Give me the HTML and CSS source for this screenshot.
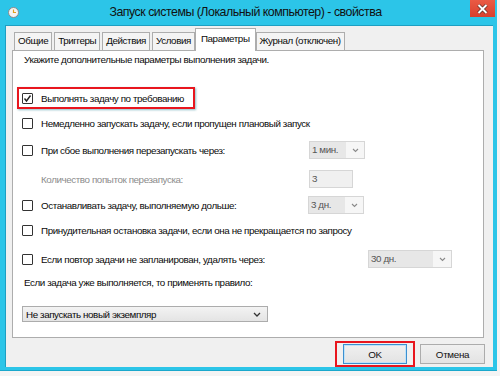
FILE: index.html
```html
<!DOCTYPE html>
<html lang="ru">
<head>
    <meta charset="UTF-8">
    <title>Запуск системы - свойства</title>
    <link rel="stylesheet" href="styles.css">
</head>
<body>
    <div class="window">
        <!-- Заголовок окна -->
        <div class="titlebar">
            <svg class="app-icon" width="11" height="11" viewBox="0 0 11 11">
                <circle cx="5.5" cy="5.5" r="5" fill="#f4f4f4" stroke="#8a8a8a" stroke-width="1"/>
                <path d="M5.5 2.5 V5.5 H8" fill="none" stroke="#e0a020" stroke-width="1.2"/>
            </svg>
            <div class="title">Запуск системы (Локальный компьютер) - свойства</div>
            <div class="close">
                <svg width="11" height="10" viewBox="0 0 11 10">
                    <path d="M1.5 1 L9.5 9 M9.5 1 L1.5 9" stroke="#5a2a20" stroke-width="3.4"/>
                    <path d="M1.5 1 L9.5 9 M9.5 1 L1.5 9" stroke="#ffffff" stroke-width="2"/>
                </svg>
            </div>
        </div>

        <div class="client">
            <!-- Вкладки -->
            <div class="tabs">
                <div class="tab">Общие</div>
                <div class="tab">Триггеры</div>
                <div class="tab">Действия</div>
                <div class="tab">Условия</div>
                <div class="tab tab-active">Параметры</div>
                <div class="tab">Журнал (отключен)</div>
            </div>

            <div class="panel">
                <div class="intro">Укажите дополнительные параметры выполнения задачи.</div>

                <div class="row row-1">
                    <div class="mark">
                        <span class="check">
                            <svg width="9" height="9" viewBox="0 0 9 9"><path d="M1.5 4.5 L3.5 7 L7.5 1.5" fill="none" stroke="#222" stroke-width="1.4"/></svg>
                        </span>
                        <span class="label">Выполнять задачу по требованию</span>
                    </div>
                </div>

                <div class="row row-2">
                    <span class="check"></span>
                    <span class="label">Немедленно запускать задачу, если пропущен плановый запуск</span>
                </div>

                <div class="row row-3">
                    <span class="check"></span>
                    <span class="label label-restart">При сбое выполнения перезапускать через:</span>
                    <div class="select select-small">
                        <span class="select-text">1 мин.</span>
                        <span class="select-arrow"><svg width="7" height="5" viewBox="0 0 7 5"><path d="M1 1 L3.5 3.5 L6 1" fill="none" stroke="#8a8a8a" stroke-width="1.1"/></svg></span>
                    </div>
                </div>

                <div class="row row-4">
                    <span class="label label-muted">Количество попыток перезапуска:</span>
                    <div class="input">3</div>
                </div>

                <div class="row row-5">
                    <span class="check"></span>
                    <span class="label label-stop">Останавливать задачу, выполняемую дольше:</span>
                    <div class="select select-small">
                        <span class="select-text">3 дн.</span>
                        <span class="select-arrow"><svg width="7" height="5" viewBox="0 0 7 5"><path d="M1 1 L3.5 3.5 L6 1" fill="none" stroke="#8a8a8a" stroke-width="1.1"/></svg></span>
                    </div>
                </div>

                <div class="row row-6">
                    <span class="check"></span>
                    <span class="label">Принудительная остановка задачи, если она не прекращается по запросу</span>
                </div>

                <div class="row row-7">
                    <span class="check"></span>
                    <span class="label label-delete">Если повтор задачи не запланирован, удалять через:</span>
                    <div class="select select-wide">
                        <span class="select-text">30 дн.</span>
                        <span class="select-arrow"><svg width="7" height="5" viewBox="0 0 7 5"><path d="M1 1 L3.5 3.5 L6 1" fill="none" stroke="#8a8a8a" stroke-width="1.1"/></svg></span>
                    </div>
                </div>

                <div class="rule">Если задача уже выполняется, то применять правило:</div>

                <div class="combo">
                    <span>Не запускать новый экземпляр</span>
                    <svg width="8" height="5" viewBox="0 0 8 5"><path d="M1 1 L4 4 L7 1" fill="none" stroke="#333" stroke-width="1.3"/></svg>
                </div>
            </div>

            <!-- Кнопки -->
            <div class="buttons">
                <div class="ok-mark">
                    <button class="btn btn-default">OK</button>
                </div>
                <button class="btn">Отмена</button>
            </div>
        </div>
    </div>
</body>
</html>
```

FILE: styles.css
```css
* {
    margin: 0;
    padding: 0;
    box-sizing: border-box;
}

body {
    font-family: 'Liberation Sans', Arial, sans-serif;
    font-size: 9.8px;
    letter-spacing: -0.4px;
    color: #0a0a0a;
    background-color: #f4f4f4;
    width: 500px;
    height: 376px;
    overflow: hidden;
}

/* Окно */
.window {
    width: 497px;
    height: 371px;
    background-color: #2cc5e8;
    padding: 0 4px 3px 5px;
    display: flex;
    flex-direction: column;
    border-bottom: 1px solid #1aa8cc;
}

.titlebar {
    height: 25px;
    display: flex;
    align-items: flex-start;
}

.app-icon {
    margin: 7px 0 0 3px;
}

.title {
    flex: 1;
    text-align: center;
    font-size: 12.4px;
    letter-spacing: -0.5px;
    line-height: 25px;
    color: #111;
    padding-left: 2px;
}

.close {
    width: 25px;
    height: 17px;
    background: linear-gradient(#ea5a44, #d8402e);
    display: flex;
    align-items: center;
    justify-content: center;
    margin-right: -2px;
}

.client {
    flex: 1;
    background-color: #f0f0f0;
    border-left: 1px solid #1e9fc2;
    border-top: 1px solid #1e9fc2;
    padding: 2px 0 0 6px;
    display: flex;
    flex-direction: column;
}

/* Вкладки */
.tabs {
    display: flex;
    align-items: flex-end;
    height: 22px;
    padding-left: 2px;
}

.tab {
    height: 18px;
    line-height: 16px;
    padding: 0 3px;
    margin-right: 2px;
    border: 1px solid #adadad;
    border-bottom: none;
    background-color: #f4f4f4;
}

.tab-active {
    height: 23px;
    line-height: 20px;
    background-color: #ffffff;
    margin: 0 0 -1px -2px;
    padding: 0 5px;
    position: relative;
    z-index: 1;
}

.panel {
    width: 472px;
    height: 288px;
    background-color: #ffffff;
    border: 1px solid #adadad;
    display: flex;
    flex-direction: column;
}

.intro {
    height: 18px;
    line-height: 18px;
    padding-left: 11px;
}

.row {
    display: flex;
    align-items: center;
    height: 20px;
    padding-left: 9px;
}

.row-1 {
    margin-top: 18px;
    height: 22px;
    padding-left: 4px;
}

.mark {
    display: flex;
    align-items: center;
    width: 178px;
    height: 22px;
    border: 2px solid #e8161e;
    padding-left: 3px;
    box-shadow: 1px 1px 2px rgba(0, 110, 130, 0.45);
}

.row-2 { margin-top: 4px; }
.row-3 { margin-top: 7px; }
.row-4 { margin-top: 9px; padding-left: 28px; }
.row-5 { margin-top: 6px; }
.row-6 { margin-top: 5px; }
.row-7 { margin-top: 9px; }

.check {
    width: 11px;
    height: 11px;
    border: 1px solid #333;
    border-radius: 1px;
    background-color: #fff;
    margin-right: 8px;
    display: flex;
    align-items: center;
    justify-content: center;
    flex-shrink: 0;
}

.label {
    white-space: nowrap;
}

.label-restart { width: 268px; }
.label-stop { width: 267px; }
.label-delete { width: 327px; }
.label-muted {
    color: #8c8c8c;
    width: 268px;
}

/* Выпадающие списки (неактивные) */
.select {
    height: 18px;
    border: 1px solid #d6d6d6;
    background-color: #f6f6f6;
    display: flex;
    align-items: center;
    color: #555;
}

.select-small { width: 56px; }
.select-wide { width: 84px; }

.select-text {
    flex: 1;
    height: 100%;
    line-height: 16px;
    padding-left: 2px;
    background-color: #e7e7e7;
}

.select-arrow {
    width: 18px;
    display: flex;
    justify-content: center;
}

.input {
    width: 44px;
    height: 18px;
    line-height: 16px;
    border: 1px solid #d6d6d6;
    background-color: #f0f0f0;
    color: #555;
    padding-left: 2px;
}

.rule {
    margin-top: 5px;
    height: 18px;
    line-height: 18px;
    padding-left: 11px;
}

.combo {
    margin: 14px 0 0 9px;
    width: 246px;
    height: 16px;
    border: 1px solid #acacac;
    background: linear-gradient(#f3f3f3, #e4e4e4);
    display: flex;
    align-items: center;
    justify-content: space-between;
    padding: 0 6px 0 3px;
}

/* Кнопки */
.buttons {
    display: flex;
    justify-content: flex-end;
    align-items: center;
    margin-top: 3px;
    padding-right: 8px;
}

.ok-mark {
    border: 2px solid #e8161e;
    padding: 1px 6px;
    margin-right: 5px;
}

.btn {
    font-family: inherit;
    font-size: 9.8px;
    letter-spacing: -0.3px;
    width: 65px;
    height: 20px;
    border: 1px solid #acacac;
    background: linear-gradient(#f0f0f0, #e3e3e3);
    color: #111;
}

.btn-default {
    width: 64px;
    border: 1px solid #3c8fd0;
    box-shadow: inset 0 0 0 1px #bfe3f8;
}
```
